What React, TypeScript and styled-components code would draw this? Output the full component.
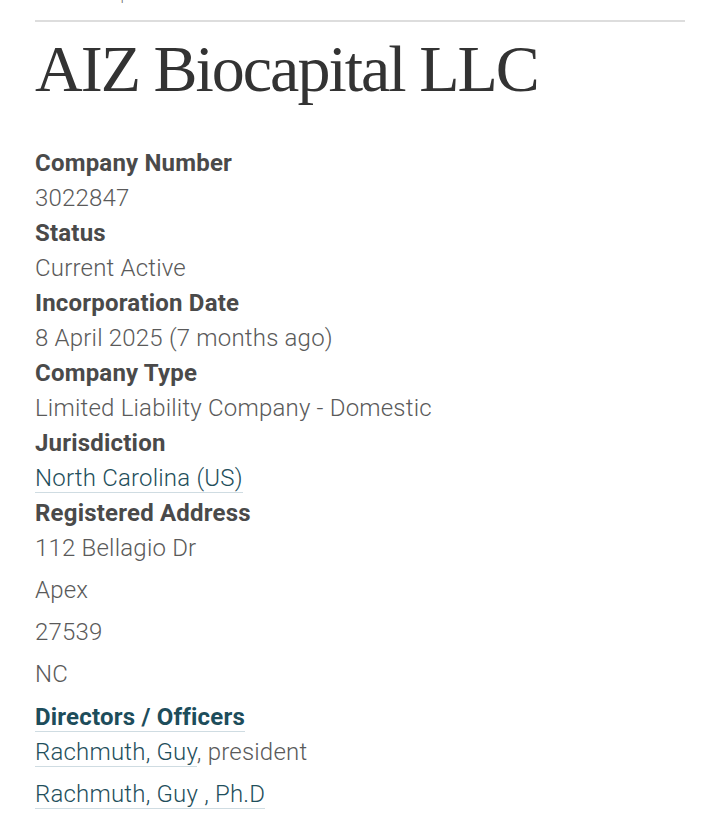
import styled, { createGlobalStyle } from "styled-components";

const GlobalStyle = createGlobalStyle`
  body {
    margin: 0;
    background: #ffffff;
    font-family: Roboto, "Liberation Sans", Arial, sans-serif;
    color: #555555;
  }
`;

const details = [
  { label: "Company Number", value: "3022847" },
  { label: "Status", value: "Current Active" },
  { label: "Incorporation Date", value: "8 April 2025 (7 months ago)" },
  { label: "Company Type", value: "Limited Liability Company - Domestic" },
];

const address = ["112 Bellagio Dr", "Apex", "27539", "NC"];

const App = () => {
  return (
    <SPage>
      <GlobalStyle />
      <SCrumbs>
        <SCrumbText>Home › Companies › US</SCrumbText>
      </SCrumbs>
      <STitle>AIZ Biocapital LLC</STitle>
      <SDetails>
        {details.map((d) => (
          <div key={d.label}>
            <SLabel>{d.label}</SLabel>
            <SValue>{d.value}</SValue>
          </div>
        ))}
        <SLabel>Jurisdiction</SLabel>
        <SValue>
          <SLink href="#">North Carolina (US)</SLink>
        </SValue>
        <SLabel>Registered Address</SLabel>
        {address.map((line, i) => (
          <SAddressLine key={line} $first={i === 0}>
            {line}
          </SAddressLine>
        ))}
        <SSectionTitle>
          <SHeadingLink href="#">Directors / Officers</SHeadingLink>
        </SSectionTitle>
        <SOfficer $first>
          <SLink href="#">Rachmuth, Guy</SLink>, president
        </SOfficer>
        <SOfficer>
          <SLink href="#">Rachmuth, Guy , Ph.D</SLink>
        </SOfficer>
      </SDetails>
    </SPage>
  );
};

export default App;

const SPage = styled.div`
  padding: 0 35px;
  height: 840px;
  overflow: hidden;
`;

const SCrumbs = styled.div`
  margin-top: -14px;
  height: 18px;
  padding-bottom: 16px;
  border-bottom: 2px solid #dddddd;
`;

const SCrumbText = styled.span`
  display: block;
  padding-left: 8px;
  font-size: 14px;
  line-height: 18px;
  font-weight: 300;
  color: #666666;
`;

const STitle = styled.h1`
  margin: 7px 0 0;
  font-family: "Liberation Serif", "Times New Roman", serif;
  font-weight: 400;
  font-size: 66px;
  line-height: 79px;
  letter-spacing: -2px;
  color: #333333;
`;

const SDetails = styled.div`
  margin-top: 38px;
  font-size: 24px;
  line-height: 35px;
  letter-spacing: 0.2px;
`;

const SLabel = styled.div`
  font-weight: 700;
  color: #4a4a4a;
`;

const SValue = styled.div`
  font-weight: 300;
  color: #5a5a5a;
`;

const SAddressLine = styled.p<{ $first?: boolean }>`
  margin: ${(p) => (p.$first ? "0" : "7px")} 0 0;
  font-weight: 300;
  color: #5a5a5a;
`;

const SSectionTitle = styled.h3`
  margin: 8px 0 0;
  font-size: 24px;
  line-height: 35px;
  font-weight: 700;
`;

const SHeadingLink = styled.a`
  color: #1d4d5b;
  text-decoration: none;
  border-bottom: 1px solid #cfdce2;
`;

const SOfficer = styled.p<{ $first?: boolean }>`
  margin: ${(p) => (p.$first ? "0" : "7px")} 0 0;
  font-weight: 300;
  color: #5a5a5a;
`;

const SLink = styled.a`
  color: #1f4f5c;
  text-decoration: none;
  border-bottom: 1px solid #cfdce2;
`;
